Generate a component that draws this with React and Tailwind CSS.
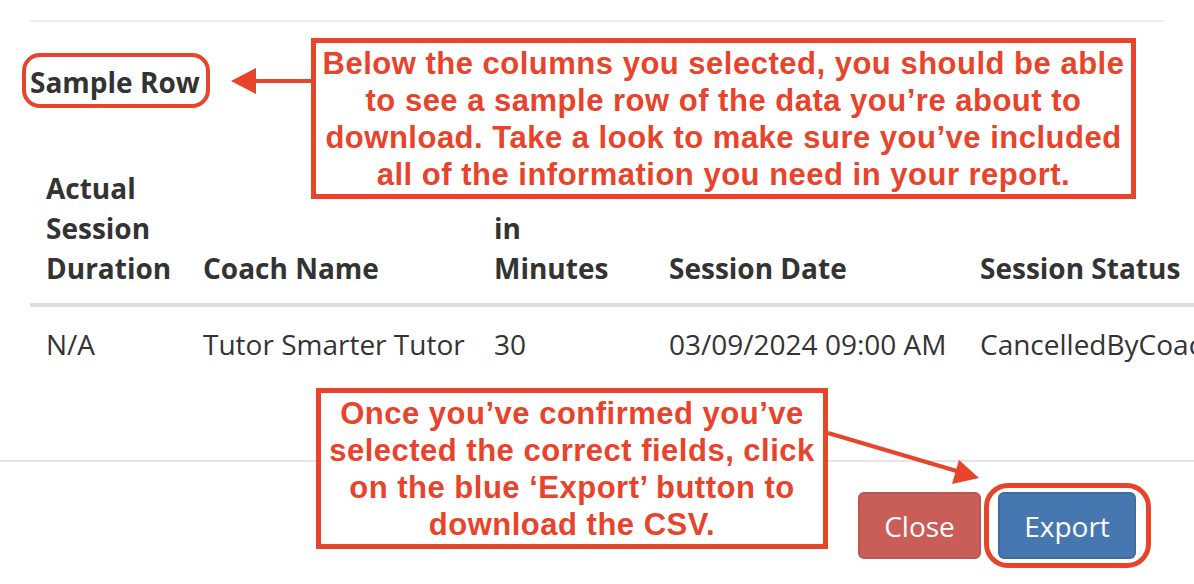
const RED = 'border-[#e8432b]';

const headers = [
  { lines: ['Actual', 'Session', 'Duration'], w: 'w-[157px]' },
  { lines: ['Coach Name'], w: 'w-[291px]' },
  { lines: ['in', 'Minutes'], w: 'w-[175px]' },
  { lines: ['Session Date'], w: 'w-[311px]' },
  { lines: ['Session Status'], w: 'w-[320px]' },
];

const sample = ['N/A', 'Tutor Smarter Tutor', '30', '03/09/2024 09:00 AM', 'CancelledByCoach'];

function Callout({ className, lines }) {
  return (
    <div
      className={`absolute flex flex-col items-center justify-center border-[5px] ${RED} bg-white text-center text-[31px] font-bold leading-[37px] tracking-[0.5px] text-[#e8432b] ${className}`}
      style={{ fontFamily: '"Liberation Sans", Arial, sans-serif' }}
    >
      {lines.map((l) => (
        <div key={l} className="whitespace-nowrap">{l}</div>
      ))}
    </div>
  );
}

export default function App() {
  return (
    <div
      className="relative h-[584px] w-[1194px] overflow-hidden bg-white text-[#333]"
      style={{ fontFamily: '"Open Sans", sans-serif' }}
    >
      <div className="pl-[30px] pr-[29px] pt-[20px]">
        <div className="h-[2px] bg-[#eeeeee]" />
        <h4 className="mt-[40px] text-[28px] font-bold leading-[40px]">Sample Row</h4>
      </div>

      <div className="mt-[66px] pl-[30px]">
        <table className="w-[1254px] table-fixed border-collapse text-[28px] leading-[40px]">
          <thead>
            <tr className="border-b-4 border-[#dddddd]">
              {headers.map((h) => (
                <th key={h.lines[0]} className={`${h.w} px-4 pb-[15px] text-left align-bottom font-bold whitespace-nowrap`}>
                  {h.lines.map((l) => (
                    <div key={l}>{l}</div>
                  ))}
                </th>
              ))}
            </tr>
          </thead>
          <tbody>
            <tr>
              {sample.map((v) => (
                <td key={v} className="px-4 pt-[17px] whitespace-nowrap">{v}</td>
              ))}
            </tr>
          </tbody>
        </table>
      </div>

      <div className="mt-[96px] h-[2px] bg-[#e5e5e5]" />

      <div className="flex justify-end gap-[17px] pr-[58px] pt-[30px]">
        <button className="h-[67px] w-[123px] rounded-[6px] border-2 border-[#c0554f] bg-[#c95d57] text-[28px] text-white">
          Close
        </button>
        <button className="h-[67px] w-[138px] rounded-[6px] border-2 border-[#3e6ca3] bg-[#4777b0] text-[28px] text-white">
          Export
        </button>
      </div>

      {/* annotations */}
      <div className={`absolute left-[22px] top-[53px] h-[55px] w-[188px] rounded-[18px] border-[4px] ${RED}`} />
      <div className={`absolute left-[984px] top-[483px] h-[85px] w-[167px] rounded-[24px] border-[5px] ${RED}`} />

      <svg className="absolute left-0 top-0" width="1194" height="584">
        <line x1="250" y1="81" x2="313" y2="81" stroke="#e8432b" strokeWidth="4" />
        <polygon points="231,81 256,68 256,94" fill="#e8432b" />
        <line x1="828" y1="433" x2="960" y2="472" stroke="#e8432b" strokeWidth="4" />
        <polygon points="979,478 952,484 959,460" fill="#e8432b" />
      </svg>

      <Callout
        className="left-[311px] top-[38px] h-[161px] w-[825px]"
        lines={[
          'Below the columns you selected, you should be able',
          'to see a sample row of the data you\u2019re about to',
          'download. Take a look to make sure you\u2019ve included',
          'all of the information you need in your report.',
        ]}
      />
      <Callout
        className="left-[316px] top-[388px] h-[161px] w-[512px]"
        lines={[
          'Once you\u2019ve confirmed you\u2019ve',
          'selected the correct fields, click',
          'on the blue \u2018Export\u2019 button to',
          'download the CSV.',
        ]}
      />
    </div>
  );
}
